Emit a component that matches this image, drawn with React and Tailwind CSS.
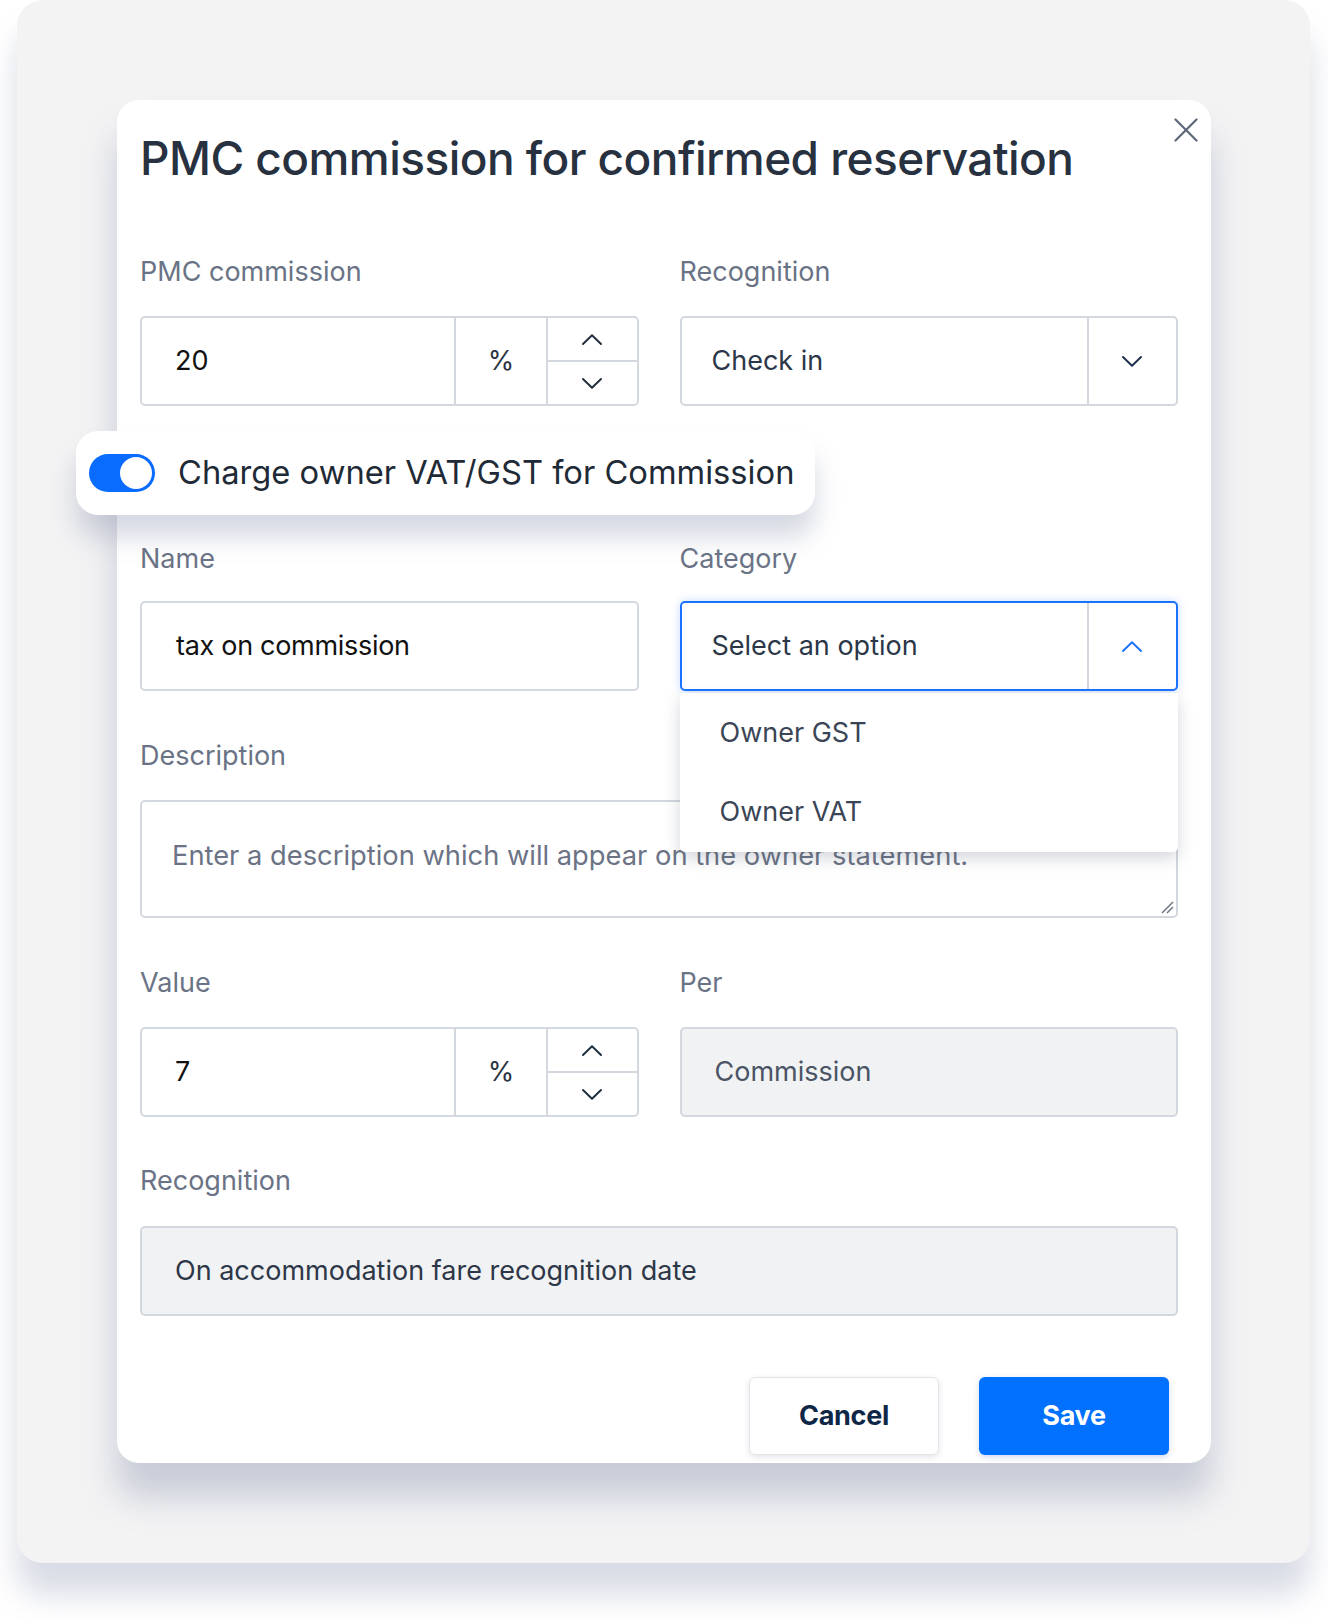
import React from "react";

const Label = ({ children }) => (
  <div className="h-[40px] leading-[40px] text-[27px] text-[#6a7385]">{children}</div>
);

const Chevron = ({ up, color = "#1f2d3d", w = 20 }) => (
  <svg width={w} height="11" viewBox="0 0 20 11" fill="none">
    <polyline
      points={up ? "1,10 10,1.2 19,10" : "1,1 10,9.8 19,1"}
      stroke={color}
      strokeWidth="1.9"
      strokeLinecap="round"
      strokeLinejoin="round"
    />
  </svg>
);

const NumberField = ({ value }) => (
  <div className="flex h-[90px] border-2 border-[#d3d7de] rounded-[5px] bg-white">
    <div className="w-[312px] flex items-center pl-[33px] text-[27px] text-[#111111]">{value}</div>
    <div className="w-[92px] border-l-2 border-[#d3d7de] flex items-center justify-center text-[27px] text-[#2b3442]">%</div>
    <div className="flex-1 border-l-2 border-[#d3d7de] flex flex-col">
      <div className="flex-1 flex items-center justify-center border-b-2 border-[#d3d7de]">
        <Chevron up />
      </div>
      <div className="flex-1 flex items-center justify-center">
        <Chevron />
      </div>
    </div>
  </div>
);

export default function App() {
  return (
    <div className="w-[1328px] h-[1623px] bg-white overflow-hidden font-['Inter','Liberation_Sans',sans-serif]">
      <div className="ml-[17px] w-[1293px] h-[1563px] rounded-[26px] bg-[#f3f3f4] shadow-[0_32px_30px_rgba(120,130,160,0.28)] pt-[100px] pl-[100px]">
        <div className="relative w-[1094px] h-[1363px] bg-white rounded-[22px] shadow-[0_34px_34px_rgba(120,130,160,0.34)] pt-[30px] pl-[23px] pr-[33px]">
          {/* close */}
          <svg className="absolute right-[13px] top-[18px]" width="24" height="24" viewBox="0 0 24 24" fill="none">
            <line x1="1.5" y1="1.5" x2="22.5" y2="22.5" stroke="#5b6578" strokeWidth="2.2" strokeLinecap="round" />
            <line x1="22.5" y1="1.5" x2="1.5" y2="22.5" stroke="#5b6578" strokeWidth="2.2" strokeLinecap="round" />
          </svg>

          <h1 className="text-[46px] leading-[56px] font-medium text-[#27313f] tracking-[-0.55px]">
            PMC commission for confirmed reservation
          </h1>

          <div className="mt-[66px] grid grid-cols-2 gap-x-[41px]">
            <div>
              <Label>PMC commission</Label>
              <div className="mt-[24px]">
                <NumberField value="20" />
              </div>
            </div>
            <div>
              <Label>Recognition</Label>
              <div className="mt-[24px] flex h-[90px] border-2 border-[#d3d7de] rounded-[5px] bg-white">
                <div className="w-[405px] flex items-center pl-[30px] text-[27px] text-[#2b3748]">Check in</div>
                <div className="flex-1 border-l-2 border-[#d3d7de] flex items-center justify-center">
                  <Chevron color="#1e2f4d" />
                </div>
              </div>
            </div>
          </div>

          {/* toggle card */}
          <div className="mt-[25px] ml-[-64px] w-[739px] h-[84px] rounded-[22px] bg-white shadow-[0_22px_26px_rgba(120,130,160,0.3)] flex items-center pl-[13px]">
            <div className="w-[66px] h-[38px] rounded-full bg-[#0a6cff] flex items-center justify-end pr-[1px]">
              <div className="w-[36px] h-[36px] rounded-full bg-white border-2 border-[#0a6cff]" />
            </div>
            <div className="ml-[23px] text-[32.7px] text-[#1f2a37]">Charge owner VAT/GST for Commission</div>
          </div>

          <div className="mt-[24px] grid grid-cols-2 gap-x-[41px]">
            <div>
              <Label>Name</Label>
              <div className="mt-[22px] h-[90px] border-2 border-[#d3d7de] rounded-[5px] bg-white flex items-center pl-[34px] text-[27px] tracking-[-0.3px] text-[#111111]">
                tax on commission
              </div>
            </div>
            <div className="relative z-10">
              <Label>Category</Label>
              <div className="mt-[22px] flex h-[90px] border-2 border-[#1a73ff] rounded-[5px] bg-white shadow-[0_0_8px_rgba(26,115,255,0.25)]">
                <div className="w-[405px] flex items-center pl-[30px] text-[27px] text-[#2b3748]">Select an option</div>
                <div className="flex-1 border-l-2 border-[#d3d7de] flex items-center justify-center">
                  <Chevron up color="#1a73ff" />
                </div>
              </div>
              <div className="absolute left-0 right-0 top-[154px] h-[159px] bg-white rounded-b-[5px] shadow-[0_6px_16px_rgba(60,70,90,0.22)] flex flex-col">
                <div className="h-[80px] flex items-center pl-[40px] text-[27px] text-[#3a4556]">Owner GST</div>
                <div className="h-[79px] flex items-center pl-[40px] text-[27px] text-[#3a4556]">Owner VAT</div>
              </div>
            </div>
          </div>

          <div className="mt-[45px]">
            <Label>Description</Label>
            <div className="relative mt-[24px] h-[118px] border-2 border-[#d3d7de] rounded-[5px] bg-white pl-[30px] pt-[34px] text-[27.3px] leading-[40px] text-[#6b7385]">
              Enter a description which will appear on the owner statement.
              <svg className="absolute right-[2px] bottom-[2px]" width="14" height="14" viewBox="0 0 14 14" fill="none">
                <line x1="2" y1="13" x2="13" y2="2" stroke="#6b7280" strokeWidth="1.4" />
                <line x1="7" y1="13" x2="13" y2="7" stroke="#6b7280" strokeWidth="1.4" />
              </svg>
            </div>
          </div>

          <div className="mt-[45px] grid grid-cols-2 gap-x-[41px]">
            <div>
              <Label>Value</Label>
              <div className="mt-[24px]">
                <NumberField value="7" />
              </div>
            </div>
            <div>
              <Label>Per</Label>
              <div className="mt-[24px] h-[90px] border-2 border-[#d3d7de] rounded-[5px] bg-[#f1f2f4] flex items-center pl-[33px] text-[27px] text-[#4a5464]">
                Commission
              </div>
            </div>
          </div>

          <div className="mt-[44px]">
            <Label>Recognition</Label>
            <div className="mt-[25px] h-[90px] border-2 border-[#d3d7de] rounded-[5px] bg-[#f1f2f4] flex items-center pl-[33px] text-[27px] text-[#2d3748]">
              On accommodation fare recognition date
            </div>
          </div>

          <div className="mt-[61px] flex justify-end gap-[40px] pr-[9px]">
            <div className="w-[190px] h-[78px] rounded-[6px] bg-white border border-[#e3e5ea] shadow-[0_2px_6px_rgba(60,70,90,0.15)] flex items-center justify-center text-[27px] font-bold tracking-[-0.3px] text-[#0f2747]">
              Cancel
            </div>
            <div className="w-[190px] h-[78px] rounded-[6px] bg-[#0070ff] shadow-[0_2px_6px_rgba(0,60,160,0.2)] flex items-center justify-center text-[27px] font-bold tracking-[-0.3px] text-white">
              Save
            </div>
          </div>
        </div>
      </div>
    </div>
  );
}
